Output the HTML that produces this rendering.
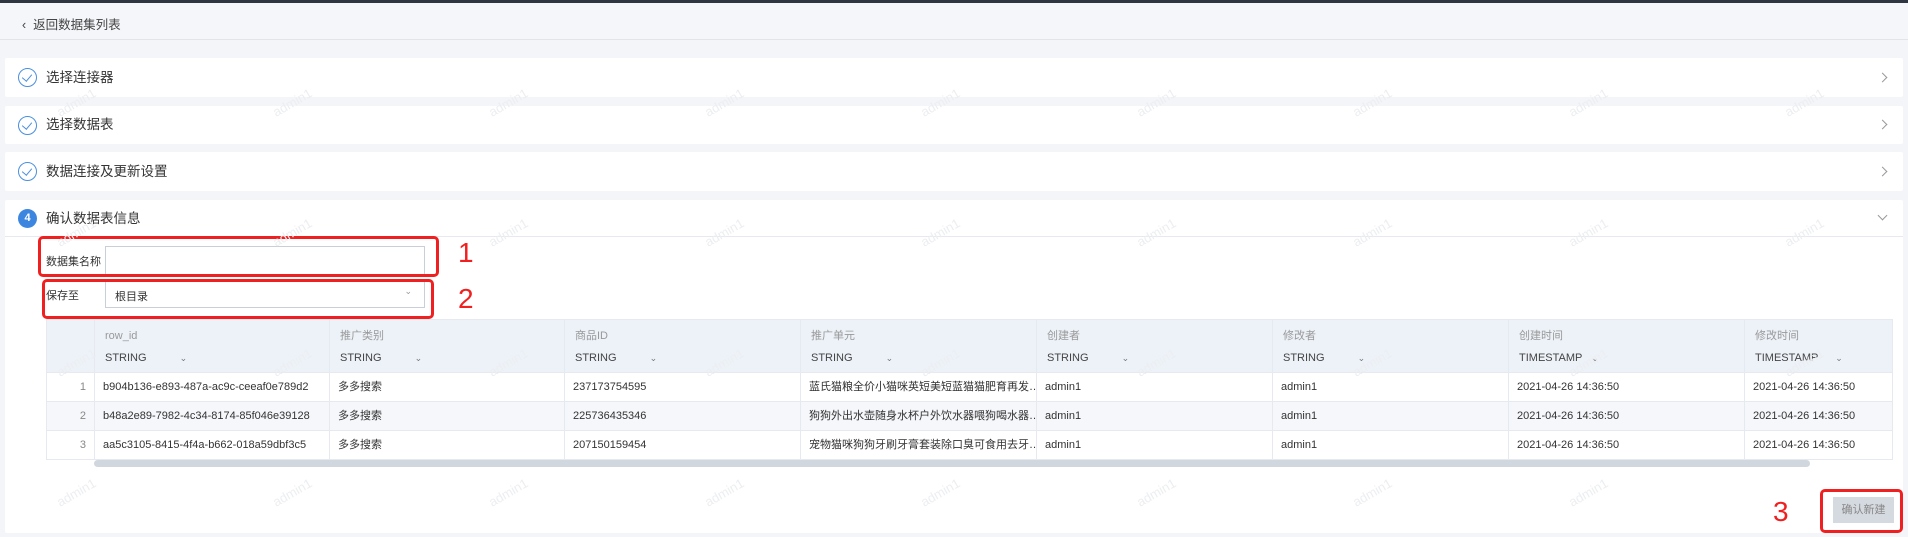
<!DOCTYPE html>
<html><head><meta charset="utf-8"><style>
*{box-sizing:border-box;margin:0;padding:0}
body{width:1908px;height:537px;overflow:hidden;background:#f3f5f9;font-family:"Liberation Sans","Noto Sans CJK SC",sans-serif;color:#333;position:relative;font-size:12px}
.abs{position:absolute}
.top{left:0;top:0;width:1908px;height:3px;background:#2f3541}
.hdr{left:0;top:3px;width:1908px;height:37px;background:#f5f6fa;border-bottom:1px solid #e1e4ea}
.hdr span{position:absolute;left:22px;top:11px;font-size:12.5px;color:#444}
.card{left:5px;width:1898px;background:#fff;border-radius:2px}
.ck{position:absolute;left:13px;width:19px;height:19px;border:1.3px solid #4a8fe0;border-radius:50%}
.ck:after{content:"";position:absolute;left:5px;top:3px;width:5px;height:8px;border-right:1.3px solid #4a8fe0;border-bottom:1.3px solid #4a8fe0;transform:rotate(40deg)}
.ttl{position:absolute;left:41px;font-size:13.5px;color:#333;line-height:18px}
.arr{position:absolute;right:17px;width:7px;height:7px;border-right:1.2px solid #999;border-top:1.2px solid #999;transform:rotate(45deg)}
.inp{border:1px solid #c9ced8;background:#fff}
.red{border:3px solid #f02020;border-radius:5px}
.num{color:#f02020;font-size:28px;font-family:"Liberation Sans",sans-serif}
table{border-collapse:collapse;table-layout:fixed}
td,th{border:1px solid #e6e9ef;font-weight:normal;text-align:left;white-space:nowrap;overflow:hidden;font-size:11px;line-height:14px}
th{background:#edf2f9;height:53px;vertical-align:top;padding:0 10px;color:#999}
th .n{display:block;margin-top:8px;height:16px;line-height:16px}
th .t{display:block;margin-top:6px;color:#444;height:16px;line-height:16px}
th .t i{font-style:normal;display:inline-block;margin-left:30px;color:#777;font-size:9px}
td{height:29px;padding:0 8px;color:#333}
tr.alt td{background:#f5f7fa}
td.i{text-align:right;color:#888}
.wm{position:absolute;color:#eceef1;font-size:13px;transform:rotate(-30deg)}
</style></head><body>
<div class="abs top"></div>
<div class="abs hdr"><span>‹&nbsp;&nbsp;返回数据集列表</span></div>

<div class="abs card" style="top:58px;height:39px"><div class="ck" style="top:10px"></div><div class="ttl" style="top:11px">选择连接器</div><div class="arr" style="top:16px"></div></div>
<div class="abs card" style="top:106px;height:38px"><div class="ck" style="top:10px"></div><div class="ttl" style="top:10px">选择数据表</div><div class="arr" style="top:15px"></div></div>
<div class="abs card" style="top:152px;height:39px"><div class="ck" style="top:10px"></div><div class="ttl" style="top:11px">数据连接及更新设置</div><div class="arr" style="top:16px"></div></div>
<div class="abs card" style="top:200px;height:333px">
 <div style="position:absolute;left:13px;top:9px;width:19px;height:19px;border-radius:50%;background:#3d86e0;color:#fff;font-size:11px;text-align:center;line-height:19px;font-weight:bold">4</div>
 <div class="ttl" style="top:10px">确认数据表信息</div>
 <div style="position:absolute;right:17px;top:12px;width:7px;height:7px;border-right:1.2px solid #999;border-bottom:1.2px solid #999;transform:rotate(45deg)"></div>
 <div style="position:absolute;left:0;top:36px;width:1898px;height:1px;background:#e6e9ef"></div>
</div>

<div class="abs" style="left:46px;top:253px;font-size:11px">数据集名称</div>
<div class="abs inp" style="left:105px;top:246px;width:320px;height:29px"></div>
<div class="abs" style="left:46px;top:287px;font-size:11px">保存至</div>
<div class="abs inp" style="left:105px;top:280px;width:320px;height:28px"><span style="position:absolute;left:9px;top:7px;font-size:11px">根目录</span><span style="position:absolute;right:12px;top:5px;color:#999;font-size:9px">⌄</span></div>
<div class="abs red" style="left:38px;top:236px;width:401px;height:41px"></div>
<div class="abs red" style="left:42px;top:279px;width:392px;height:40px"></div>
<div class="abs num" style="left:458px;top:237px">1</div>
<div class="abs num" style="left:458px;top:283px">2</div>

<table class="abs" style="left:46px;top:319px;width:1846px">
<colgroup><col style="width:48px"><col style="width:235px"><col style="width:235px"><col style="width:236px"><col style="width:236px"><col style="width:236px"><col style="width:236px"><col style="width:236px"><col style="width:148px"></colgroup>
<tr><th></th>
<th><span class="n">row_id</span><span class="t">STRING <i>⌄</i></span></th>
<th><span class="n">推广类别</span><span class="t">STRING <i>⌄</i></span></th>
<th><span class="n">商品ID</span><span class="t">STRING <i>⌄</i></span></th>
<th><span class="n">推广单元</span><span class="t">STRING <i>⌄</i></span></th>
<th><span class="n">创建者</span><span class="t">STRING <i>⌄</i></span></th>
<th><span class="n">修改者</span><span class="t">STRING <i>⌄</i></span></th>
<th><span class="n">创建时间</span><span class="t">TIMESTAMP <i style="margin-left:6px">⌄</i></span></th>
<th><span class="n">修改时间</span><span class="t">TIMESTAMP <i style="margin-left:14px">⌄</i></span></th></tr>
<tr><td class="i">1</td><td>b904b136-e893-487a-ac9c-ceeaf0e789d2</td><td>多多搜索</td><td>237173754595</td><td>蓝氏猫粮全价小猫咪英短美短蓝猫猫肥育再发…</td><td>admin1</td><td>admin1</td><td>2021-04-26 14:36:50</td><td>2021-04-26 14:36:50</td></tr>
<tr class="alt"><td class="i">2</td><td>b48a2e89-7982-4c34-8174-85f046e39128</td><td>多多搜索</td><td>225736435346</td><td>狗狗外出水壶随身水杯户外饮水器喂狗喝水器…</td><td>admin1</td><td>admin1</td><td>2021-04-26 14:36:50</td><td>2021-04-26 14:36:50</td></tr>
<tr><td class="i">3</td><td>aa5c3105-8415-4f4a-b662-018a59dbf3c5</td><td>多多搜索</td><td>207150159454</td><td>宠物猫咪狗狗牙刷牙膏套装除口臭可食用去牙…</td><td>admin1</td><td>admin1</td><td>2021-04-26 14:36:50</td><td>2021-04-26 14:36:50</td></tr>
</table>
<div class="abs" style="left:94px;top:460px;width:1716px;height:7px;background:#d1d7de;border-radius:4px"></div>

<div class="abs" style="left:1833px;top:497px;width:61px;height:26px;background:#d5d9e0;color:#888;font-size:11px;text-align:center;line-height:26px">确认新建</div>
<div class="abs red" style="left:1820px;top:489px;width:83px;height:44px"></div>
<div class="abs num" style="left:1773px;top:496px">3</div>

<div class="wm" style="left:55px;top:95px">admin1</div><div class="wm" style="left:271px;top:95px">admin1</div><div class="wm" style="left:487px;top:95px">admin1</div><div class="wm" style="left:703px;top:95px">admin1</div><div class="wm" style="left:919px;top:95px">admin1</div><div class="wm" style="left:1135px;top:95px">admin1</div><div class="wm" style="left:1351px;top:95px">admin1</div><div class="wm" style="left:1567px;top:95px">admin1</div><div class="wm" style="left:1783px;top:95px">admin1</div>
<div class="wm" style="left:55px;top:225px">admin1</div><div class="wm" style="left:271px;top:225px">admin1</div><div class="wm" style="left:487px;top:225px">admin1</div><div class="wm" style="left:703px;top:225px">admin1</div><div class="wm" style="left:919px;top:225px">admin1</div><div class="wm" style="left:1135px;top:225px">admin1</div><div class="wm" style="left:1351px;top:225px">admin1</div><div class="wm" style="left:1567px;top:225px">admin1</div><div class="wm" style="left:1783px;top:225px">admin1</div>
<div class="wm" style="left:55px;top:355px">admin1</div><div class="wm" style="left:271px;top:355px">admin1</div><div class="wm" style="left:487px;top:355px">admin1</div><div class="wm" style="left:703px;top:355px">admin1</div><div class="wm" style="left:919px;top:355px">admin1</div><div class="wm" style="left:1135px;top:355px">admin1</div><div class="wm" style="left:1351px;top:355px">admin1</div><div class="wm" style="left:1567px;top:355px">admin1</div><div class="wm" style="left:1783px;top:355px">admin1</div>
<div class="wm" style="left:55px;top:485px">admin1</div><div class="wm" style="left:271px;top:485px">admin1</div><div class="wm" style="left:487px;top:485px">admin1</div><div class="wm" style="left:703px;top:485px">admin1</div><div class="wm" style="left:919px;top:485px">admin1</div><div class="wm" style="left:1135px;top:485px">admin1</div><div class="wm" style="left:1351px;top:485px">admin1</div><div class="wm" style="left:1567px;top:485px">admin1</div>
</body></html>
